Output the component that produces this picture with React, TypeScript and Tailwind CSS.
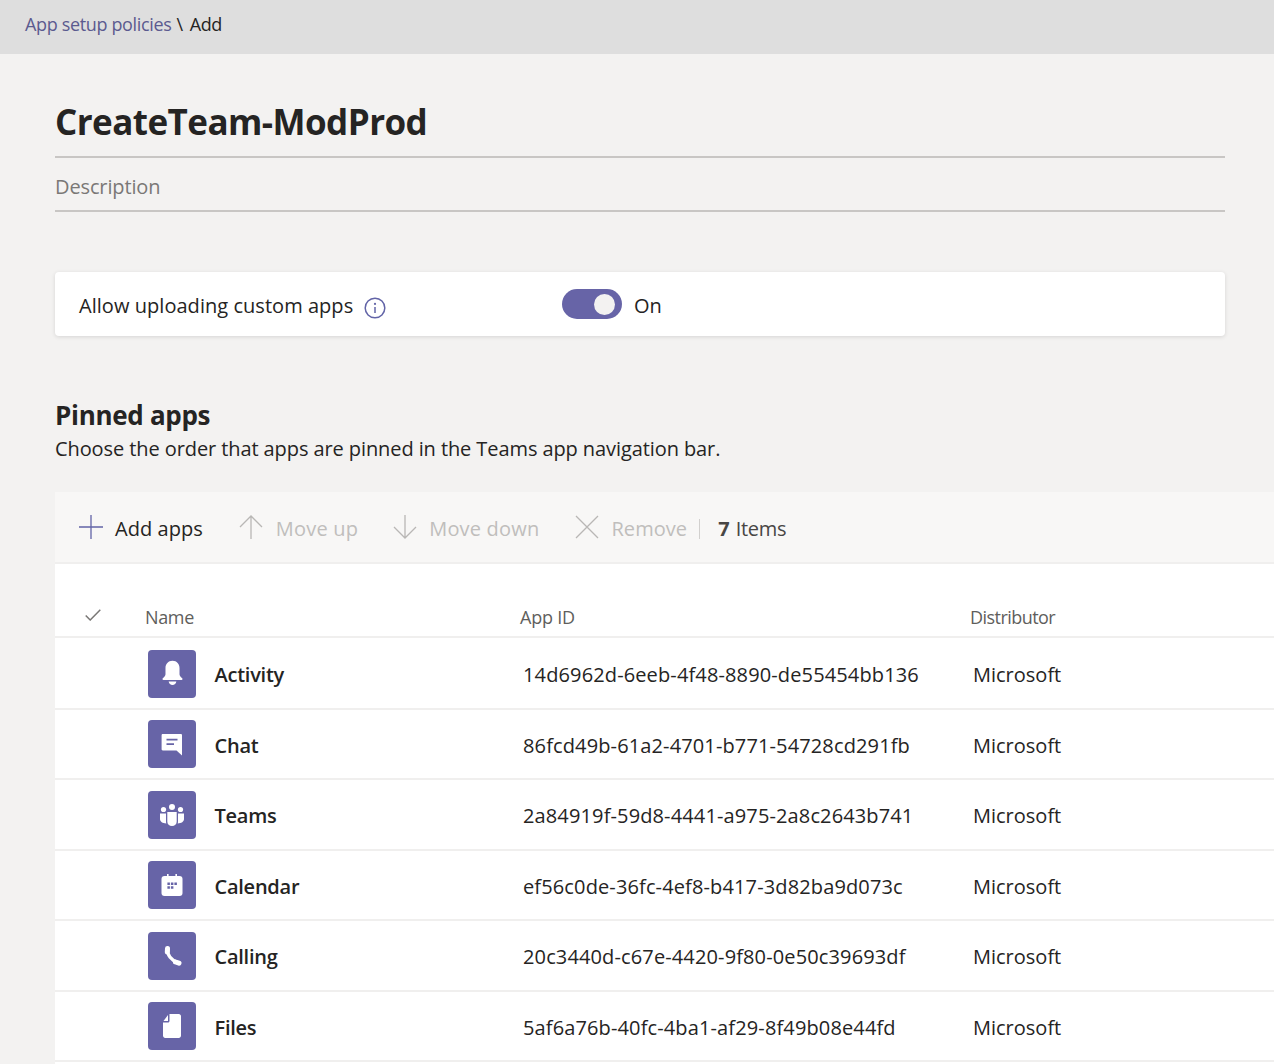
import React from 'react';

const BellIcon = () => (
  <svg width="29" height="29" viewBox="0 0 24 24" fill="white">
    <path d="M12 1.500c-3.600 0-5.800 2.700-5.800 6v5.200c0 1.300-.9 2.200-2.200 3.300-.6.500-.3 1.300.4 1.300h15.200c.7 0 1-.8.400-1.300-1.300-1.100-2.200-2-2.200-3.300V7.500c0-3.300-2.200-6-5.800-6z" />
    <path d="M8.800 18.700h6.400c-.3 1.700-1.600 2.800-3.200 2.800s-2.900-1.100-3.200-2.800z" />
  </svg>
);

const ChatIcon = () => (
  <svg width="24" height="24" viewBox="0 0 24 24">
    <path fill="white" d="M2.800 2h18c.7 0 1.200.5 1.200 1.200v20.300l-5.500-5H2.800c-.7 0-1.200-.5-1.200-1.200V3.200C1.600 2.500 2.100 2 2.800 2z" />
    <path fill="#6764a7" d="M6.500 6.700h11v1.800h-11zM6.500 11.300h7.500v1.800H6.500z" />
  </svg>
);

const TeamsIcon = () => (
  <svg width="26" height="24" viewBox="0 0 26 24" fill="white">
    <circle cx="13" cy="4" r="3" />
    <circle cx="4.500" cy="6.500" r="2.600" />
    <circle cx="21.500" cy="6.500" r="2.600" />
    <path d="M8.300 9h9.400v9.500c0 2.800-2 4.500-4.700 4.500s-4.700-1.700-4.700-4.500z" />
    <path d="M1 10.500h6v8c0 .7.100 1.300.3 1.900C3.600 20.400 1 18.700 1 16z" />
    <path d="M25 10.500h-6v8c0 .7-.1 1.300-.3 1.900 3.700 0 6.300-1.700 6.300-4.400z" />
  </svg>
);

const CalendarIcon = () => (
  <svg width="24" height="24" viewBox="0 0 24 24">
    <path fill="white" d="M7 1h1.600v3H7zM15.400 1H17v3h-1.600z" />
    <rect x="1.500" y="3" width="21" height="20" rx="3" fill="white" />
    <path fill="#6764a7" d="M7.400 9.500h2.500V12H7.400zM10.900 9.500h2.500V12h-2.500zM14.400 9.500h2.500V12h-2.500zM7.400 13.200h2.500v2.500H7.400zM10.900 13.200h2.500v2.500h-2.500z" />
  </svg>
);

const CallingIcon = () => (
  <svg width="24" height="24" viewBox="0 0 24 24" fill="none" stroke="white" strokeLinecap="round">
    <path d="M7.500 4.500C7 11 11.500 16.500 18.500 19" strokeWidth="3.600" />
    <path d="M7.500 4.500 7.300 8" strokeWidth="5" />
    <path d="M15.500 18 19 19.200" strokeWidth="5" />
  </svg>
);

const FilesIcon = () => (
  <svg width="24" height="24" viewBox="0 0 24 24" fill="white">
    <path d="M9.500 0h9.300C20 0 21 1 21 2.200v19.600c0 1.200-1 2.200-2.200 2.200H5.200C4 24 3 23 3 21.800V8.500h5c.8 0 1.500-.7 1.500-1.500z" />
    <path d="M8 1 3.500 7H8z" />
  </svg>
);

const ToolIcon = ({ d, color }: { d: string; color: string }) => (
  <svg width="24" height="24" viewBox="0 0 24 24" fill="none" stroke={color} strokeWidth="1.300">
    <path d={d} />
  </svg>
);

const apps = [
  { name: 'Activity', id: '14d6962d-6eeb-4f48-8890-de55454bb136', icon: <BellIcon /> },
  { name: 'Chat', id: '86fcd49b-61a2-4701-b771-54728cd291fb', icon: <ChatIcon /> },
  { name: 'Teams', id: '2a84919f-59d8-4441-a975-2a8c2643b741', icon: <TeamsIcon /> },
  { name: 'Calendar', id: 'ef56c0de-36fc-4ef8-b417-3d82ba9d073c', icon: <CalendarIcon /> },
  { name: 'Calling', id: '20c3440d-c67e-4420-9f80-0e50c39693df', icon: <CallingIcon /> },
  { name: 'Files', id: '5af6a76b-40fc-4ba1-af29-8f49b08e44fd', icon: <FilesIcon /> },
];

export default function App() {
  return (
    <div className="h-[1064px] overflow-hidden bg-[#f3f2f1] font-['Open_Sans','Liberation_Sans',sans-serif] text-[#252423]">
      {/* Breadcrumb */}
      <div className="h-[54px] bg-[#dedede] pl-[25px] flex items-center text-[18px] tracking-[-0.35px] pb-[5px]">
        <span className="text-[#5b5a8f]">App setup policies</span>
        <span className="ml-[5px]">\</span>
        <span className="ml-[7px]">Add</span>
      </div>

      <div className="pl-[55px]">
        {/* Title and description */}
        <div className="mr-[49px] pt-[43px]">
          <h1 className="h-[61px] text-[35px] leading-[49px] font-bold border-b-2 border-[#c8c6c4] tracking-[-0.55px]">CreateTeam-ModProd</h1>
          <div className="h-[54px] pt-[6px] flex items-center text-[20px] text-[#7a7876] border-b-2 border-[#c8c6c4] tracking-[-0.13px]">Description</div>
        </div>

        {/* Custom apps toggle */}
        <div className="mr-[49px] mt-[60px] h-[64px] bg-white rounded-[4px] shadow-[0_1px_4px_rgba(0,0,0,0.12)] flex items-center pl-[24px] text-[20px] tracking-[0.04px]">
          <span className="w-[285px] pt-[3px]">Allow uploading custom apps</span>
          <svg width="22" height="22" viewBox="0 0 22 22" fill="none" className="mt-[7px]">
            <circle cx="11" cy="11" r="9.800" stroke="#6264a7" strokeWidth="1.500" />
            <circle cx="11" cy="6.900" r="1.100" fill="#6264a7" />
            <path d="M11 10v6" stroke="#6264a7" strokeWidth="1.500" />
          </svg>
          <div className="ml-[176px] w-[60px] h-[30px] rounded-full bg-[#6764a7] flex items-center justify-end pr-[7px]">
            <div className="w-[21px] h-[21px] rounded-full bg-[#f3f2f1]" />
          </div>
          <span className="ml-[12px] pt-[3px]">On</span>
        </div>

        {/* Pinned apps */}
        <h2 className="mt-[61px] text-[26px] leading-[36px] font-bold tracking-[-0.3px]">Pinned apps</h2>
        <p className="text-[20px] leading-[30px] mt-px tracking-[-0.09px]">Choose the order that apps are pinned in the Teams app navigation bar.</p>

        <div className="mt-[28px] bg-white rounded-tl-[4px]">
          {/* Toolbar */}
          <div className="h-[72px] bg-[#f8f7f6] border-b-2 border-[#f0efee] flex items-center text-[20px] tracking-[0.05px] pl-[24px]">
            <ToolIcon d="M12 0v24M0 12h24" color="#6264a7" />
            <span className="ml-[12px] pt-[4px]">Add apps</span>
            <span className="ml-[36px]">
              <ToolIcon d="M12 24V1M1 12 12 1l11 11" color="#b9b7b5" />
            </span>
            <span className="ml-[13px] pt-[4px] text-[#c0bebc] tracking-[0.2px]">Move up</span>
            <span className="ml-[35px]">
              <ToolIcon d="M12 0v23M1 12l11 11 11-11" color="#b9b7b5" />
            </span>
            <span className="ml-[12px] pt-[4px] text-[#c0bebc] tracking-[0.2px]">Move down</span>
            <span className="ml-[36px]">
              <ToolIcon d="M1 1l22 22M23 1 1 23" color="#b9b7b5" />
            </span>
            <span className="ml-[12px] pt-[4px] text-[#c0bebc]">Remove</span>
            <div className="ml-[12px] mt-[4px] w-px h-[20px] bg-[#d2d0ce]" />
            <span className="ml-[18px] pt-[4px] font-bold text-[#484644]">7</span>
            <span className="ml-[6px] pt-[4px] text-[#484644] tracking-[-0.3px]">Items</span>
          </div>

          {/* Header row */}
          <div className="h-[74px] border-b-2 border-[#f0efee] flex items-end pb-[5px] text-[18px] tracking-[-0.35px] text-[#605e5c]">
            <div className="w-[90px] pl-[30px] pb-[10px]">
              <svg width="16" height="12" viewBox="0 0 16 12" fill="none" stroke="#7a7876" strokeWidth="1.500">
                <path d="M.7 6.500 5.200 11 15.300.7" />
              </svg>
            </div>
            <div className="w-[375px]">Name</div>
            <div className="w-[450px] tracking-[-0.2px]">App ID</div>
            <div className="tracking-[-0.55px]">Distributor</div>
          </div>

          {/* App rows */}
          <div className="pt-px">
            {apps.map((app) => (
              <div key={app.name} className="h-[70.500px] pt-px border-b-2 border-[#f0efee] flex items-center text-[20px]">
                <div className="ml-[93px] w-[48px] h-[48px] rounded-[4px] bg-[#6764a7] flex items-center justify-center">
                  {app.icon}
                </div>
                <div className="ml-[18.500px] w-[308.500px] pt-[3px] font-semibold tracking-[-0.25px]">{app.name}</div>
                <div className="w-[450px] pt-[3px] tracking-[0.13px]">{app.id}</div>
                <div className="pt-[3px]">Microsoft</div>
              </div>
            ))}
          </div>
          <div className="h-[10px]" />
        </div>
      </div>
    </div>
  );
}
